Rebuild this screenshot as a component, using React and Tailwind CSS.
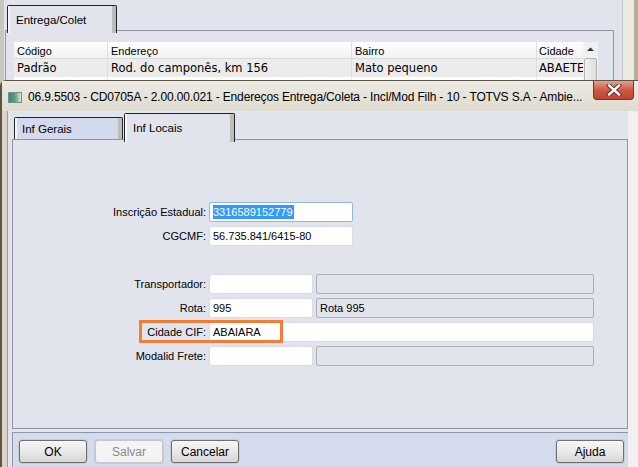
import React from 'react';

const Field = ({ w, value, disabled, focused, selected }) => (
    <div
        className={`h-[20px] flex items-center px-[3px] rounded-[2px] border ${disabled ? 'bg-[#e1e4ec] border-[#abafb7]' : focused ? 'bg-white border-[#8fb8e6]' : 'bg-white border-[#d7dbe3]'}`}
        style={w ? { width: w } : { flex: 1 }}
    >
        {selected ? (
            <span className="bg-[#3399ff] text-white leading-[14px] pr-[1px]">{value}</span>
        ) : (
            <span className="whitespace-nowrap">{value}</span>
        )}
    </div>
);

const FormRow = ({ label, children, highlight }) => (
    <div className="relative flex items-center h-[20px] mb-[4px]">
        <div className="w-[193px] text-right whitespace-nowrap">{label}</div>
        <div className="ml-[3px] flex gap-[3px] w-[385px]">{children}</div>
        {highlight && (
            <div className="absolute left-[126px] top-[-2px] w-[144px] h-[23px] border-[3px] border-[#f37d35]" />
        )}
    </div>
);

const Button = ({ children, disabled }) => (
    <div
        className={`w-[68px] h-[23px] flex items-center justify-center rounded-[3px] border text-[12px] shadow-[0_0_0_1px_#c9ccd2] ${disabled ? 'border-[#c2c5ca] bg-[#f4f4f4] text-[#8a8a8a]' : 'border-[#6f6f6f] bg-gradient-to-b from-[#f6f6f6] via-[#e9e9e9] to-[#d6d6d6] text-black'}`}
    >
        {children}
    </div>
);

export default function App() {
    return (
        <div className="relative w-[638px] h-[467px] overflow-hidden bg-[#e1e4ec] font-['Liberation_Sans',Arial,sans-serif] text-[11px] text-black">
            {/* Background window: Entrega/Colet */}
            <div className="flex h-full">
                <div className="w-[4px] bg-[#c9c6bd]" />
                <div className="flex-1 flex flex-col">
                    <div className="pt-[5px] pl-[3px]">
                        <div className="relative z-10 w-[110px] h-[28px] border border-b-0 border-[#222] rounded-t-[2px] bg-[#e1e4ec] flex">
                            <div className="w-[2px] bg-[#f4f5f8]" />
                            <div className="flex-1 pt-[6px] pl-[6px] text-[11.5px]">Entrega/Colet</div>
                            <div className="w-[4px] bg-[#bcbcbc]" />
                        </div>
                    </div>
                    <div className="-mt-[3px] ml-[1px] w-[609px] flex-1 border border-[#8c96a8] pt-[11px] pl-[8px]">
                        <div className="w-[584px] bg-white flex">
                            <div className="flex-1 overflow-hidden">
                                <div className="flex h-[17px] bg-gradient-to-b from-white to-[#f1f1f1] border-b border-[#d8d8d8]">
                                    <div className="w-[94px] pl-[3px] pt-[1px] border-r border-[#dedede]">Código</div>
                                    <div className="w-[244px] pl-[3px] pt-[1px] border-r border-[#dedede]">Endereço</div>
                                    <div className="w-[185px] pl-[3px] pt-[1px] border-r border-[#dedede]">Bairro</div>
                                    <div className="flex-1 pl-[2px] pt-[1px]">Cidade</div>
                                </div>
                                <div className="flex h-[19px] bg-[#ececec] font-['DejaVu_Sans',Verdana,sans-serif] text-[11.5px] border-b border-white">
                                    <div className="w-[94px] pl-[3px] pt-[1px] border-r border-[#dedede]">Padrão</div>
                                    <div className="w-[244px] pl-[3px] pt-[1px] border-r border-[#dedede]">Rod. do camponês, km 156</div>
                                    <div className="w-[185px] pl-[3px] pt-[1px] border-r border-[#dedede]">Mato pequeno</div>
                                    <div className="w-[46px] pl-[2px] pt-[1px] overflow-hidden whitespace-nowrap">ABAETE</div>
                                </div>
                                <div className="flex h-[10px] bg-white">
                                    <div className="w-[94px] border-r border-[#dedede]" />
                                    <div className="w-[244px] border-r border-[#dedede]" />
                                    <div className="w-[185px] border-r border-[#dedede]" />
                                </div>
                            </div>
                            <div className="w-[15px] flex flex-col items-center bg-[#f0f0f0]">
                                <svg width="9" height="16" viewBox="0 0 9 16">
                                    <path d="M1 9 L4.5 5.5 L8 9 Z" fill="#333" />
                                </svg>
                                <div className="w-[13px] h-[28px] rounded-[2px] border border-[#b3b3b3] bg-gradient-to-r from-[#f2f2f2] to-[#dcdcdc]" />
                            </div>
                        </div>
                    </div>
                </div>
                <div className="w-[12px] bg-[#ece9e2] border-l border-[#c8c8c8]" />
                <div className="w-[4px] bg-[#b8ad95]" />
            </div>

            {/* Foreground window */}
            <div className="absolute left-0 top-[80px] w-[660px] h-[400px] flex flex-col bg-[#d9d4c6] border-l-2 border-t border-[#5e5446] rounded-tl-[6px]">
                <div className="h-[30px] flex items-center pl-[6px] bg-gradient-to-b from-[#ecebe4] to-[#dedbd0] relative">
                    <div className="w-[14px] h-[11px] border border-[#7c8a9a] bg-gradient-to-r from-[#3d7f8f] via-[#5aa660] to-[#d8e2ea] mt-[2px]" />
                    <div className="ml-[6px] mt-[2px] text-[12px] whitespace-nowrap tracking-[-0.15px]">
                        06.9.5503 - CD0705A - 2.00.00.021 - Endereços Entrega/Coleta - Incl/Mod Filh - 10 - TOTVS S.A - Ambie...
                    </div>
                    <div className="absolute left-[591px] top-0 w-[41px] h-[19px] rounded-b-[4px] border border-t-0 border-[#7e3024] bg-gradient-to-b from-[#e6a090] via-[#cc5a43] to-[#c4412b] flex items-center justify-center">
                        <svg width="16" height="12" viewBox="0 0 16 12">
                            <path d="M3 1.5 L13 10.5 M13 1.5 L3 10.5" stroke="#5a2a22" strokeWidth="4.2" strokeLinecap="square" />
                            <path d="M3 1.5 L13 10.5 M13 1.5 L3 10.5" stroke="#ffffff" strokeWidth="2.4" strokeLinecap="square" />
                        </svg>
                    </div>
                </div>
                <div className="flex flex-1 pl-[5px]">
                    <div className="w-[621px] bg-[#e1e4ec] flex flex-col border-l border-[#9a9a9a]">
                        {/* Tabs */}
                        <div className="flex items-end h-[28px] pl-[6px]">
                            <div className="w-[109px] h-[22px] border border-b-0 border-[#222] rounded-t-[2px] bg-[#d3daed] flex">
                                <div className="w-[2px] bg-[#f7f8fb]" />
                                <div className="flex-1 pt-[3px] pl-[5px] text-[11.5px]">Inf Gerais</div>
                                <div className="w-[4px] bg-[#bdbdbd]" />
                            </div>
                            <div className="relative z-10 ml-[1px] -mb-[3px] w-[111px] h-[29px] border border-b-0 border-[#222] rounded-t-[2px] bg-[#e1e4ec] flex">
                                <div className="w-[2px] bg-[#f7f8fb]" />
                                <div className="flex-1 pt-[6px] pl-[6px] text-[11.5px]">Inf Locais</div>
                                <div className="w-[4px] bg-[#bdbdbd]" />
                            </div>
                        </div>
                        {/* Panel */}
                        <div className="ml-[4px] h-[290px] border border-[#8c96a8] pt-[62px]">
                            <FormRow label="Inscrição Estadual:">
                                <Field w={144} value="3316589152779" focused selected />
                            </FormRow>
                            <FormRow label="CGCMF:">
                                <Field w={144} value="56.735.841/6415-80" />
                            </FormRow>
                            <div className="h-[24px]" />
                            <FormRow label="Transportador:">
                                <Field w={104} value="" />
                                <Field value="" disabled />
                            </FormRow>
                            <FormRow label="Rota:">
                                <Field w={104} value="995" />
                                <Field value="Rota 995" disabled />
                            </FormRow>
                            <FormRow label="Cidade CIF:" highlight>
                                <Field value="ABAIARA" />
                            </FormRow>
                            <FormRow label="Modalid Frete:">
                                <Field w={104} value="" />
                                <Field value="" disabled />
                            </FormRow>
                        </div>
                        {/* Button bar */}
                        <div className="ml-[4px] mt-[3px] flex-1 bg-[#d3dbec] border-t border-l border-[#8c96a8] pt-[7px] pl-[6px] pr-[4px]">
                            <div className="flex items-center gap-[8px]">
                                <Button>OK</Button>
                                <Button disabled>Salvar</Button>
                                <Button>Cancelar</Button>
                                <div className="flex-1" />
                                <Button>Ajuda</Button>
                            </div>
                        </div>
                    </div>
                    <div className="flex-1 bg-[#f0f0f0]" />
                </div>
            </div>
        </div>
    );
}
